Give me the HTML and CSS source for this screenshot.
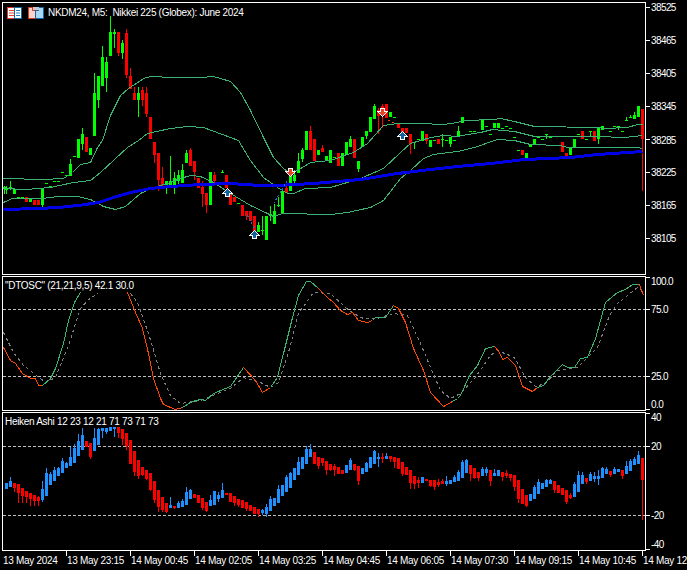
FILE: index.html
```html
<!DOCTYPE html>
<html lang="en">
  <head>
    <meta charset="UTF-8" />
    <title>NKDM24, M5</title>
    <link rel="stylesheet" href="styles.css">
  </head>
  <body>
    <div class="terminal">
      <div class="pane pane-price">
        <div class="plot">
          <svg id="priceChart" data-top="3"></svg>
          <div class="legend legend-price">
            <svg class="legend-icon" width="15" height="12" viewBox="0 0 15 12">
              <rect x="0.5" y="0.5" width="7" height="11" fill="#fff" stroke="#d8392b" />
              <rect x="7.5" y="0.5" width="7" height="11" fill="#fff" stroke="#1565a8" />
              <path d="M2 3.5h5M2 6h5M2 8.5h5" stroke="#e8432f" />
              <path d="M9 3.5h4M9 6h4M9 8.5h4" stroke="#1e7fc4" />
            </svg>
            <svg class="legend-icon" width="16" height="12" viewBox="0 0 16 12">
              <path d="M0.5 0.5h4v3h3v8h-7z" fill="#ffd4c8" stroke="#d8392b" />
              <path d="M10.5 3.5v-3h5v11h-8v-8z" fill="#a9d8f5" stroke="#1565a8" />
              <rect x="5" y="0" width="6" height="3" fill="#c8c8c8" />
            </svg>
            <span>NKDM24, M5:&nbsp; Nikkei 225 (Globex): June 2024</span>
          </div>
        </div>
        <div class="axis" id="priceAxis"></div>
      </div>

      <div class="pane pane-osc">
        <div class="plot">
          <svg id="oscChart" data-top="277"></svg>
          <div class="legend"><span>"DTOSC" (21,21,9,5) 42.1 30.0</span></div>
        </div>
        <div class="axis" id="oscAxis"></div>
      </div>

      <div class="pane pane-heiken">
        <div class="plot">
          <svg id="heikenChart" data-top="413"></svg>
          <div class="legend"><span>Heiken Ashi 12 23 12 21 71 73 71 73</span></div>
        </div>
        <div class="axis" id="heikenAxis"></div>
      </div>

      <div class="time-axis">
        <span class="time-label no-tick">13 May 2024</span>
        <span class="time-label">13 May 23:15</span>
        <span class="time-label">14 May 00:45</span>
        <span class="time-label">14 May 02:05</span>
        <span class="time-label">14 May 03:25</span>
        <span class="time-label">14 May 04:45</span>
        <span class="time-label">14 May 06:05</span>
        <span class="time-label">14 May 07:30</span>
        <span class="time-label">14 May 09:15</span>
        <span class="time-label">14 May 10:45</span>
        <span class="time-label">14 May 12</span>
      </div>
    </div>
    <script src="chart.js"></script>
  </body>
</html>
```

FILE: styles.css
```css
* {
  margin: 0;
  padding: 0;
  box-sizing: border-box;
}

body {
  width: 687px;
  height: 570px;
  overflow: hidden;
  background: #000;
  color: #fff;
  font-family: "Liberation Sans", Arial, sans-serif;
  font-size: 10px;
  line-height: 12px;
  letter-spacing: -0.3px;
}

.terminal {
  display: flex;
  flex-direction: column;
  gap: 1px;
  padding: 2px 0 0 2px;
}

.pane {
  display: flex;
  position: relative;
}
.pane-price {
  height: 273px;
}
.pane-osc {
  height: 135px;
}
.pane-heiken {
  height: 139px;
}

.plot {
  position: relative;
  flex: none;
  width: 644px;
  border: 1px solid #fff;
}
.plot > svg {
  display: block;
  width: 642px;
  height: 100%;
}

.legend {
  position: absolute;
  top: 3px;
  left: 2px;
  display: flex;
  align-items: center;
  white-space: nowrap;
}
.legend-price {
  top: 4px;
  left: 4px;
}
.legend-icon {
  flex: none;
  margin-right: 6px;
}
.legend-icon + .legend-icon {
  margin-right: 4px;
}

.axis {
  position: relative;
  flex: 1;
}
.axis-tick {
  position: absolute;
  left: -1px;
  width: 5px;
  height: 1px;
  background: #fff;
}
.axis-label {
  position: absolute;
  left: 5px;
  transform: translateY(-50%);
  white-space: nowrap;
  letter-spacing: -0.6px;
}

.time-axis {
  display: flex;
  margin-top: -1px;
}
.time-label {
  position: relative;
  flex: none;
  width: 64px;
  padding: 4px 0 0 1px;
  white-space: nowrap;
}
.time-label::before {
  content: "";
  position: absolute;
  top: 0;
  left: 0;
  width: 1px;
  height: 5px;
  background: #fff;
}
.no-tick::before {
  display: none;
}

/* chart shapes */
.wick,
.body,
.band,
.ma,
.osc,
.signal,
.level,
.trail,
.arrow {
  shape-rendering: crispEdges;
}
.band,
.ma,
.osc,
.signal,
.level,
.trail {
  fill: none;
}
.band {
  stroke: #3cb371;
}
.ma {
  stroke: #0000e6;
  stroke-width: 3;
}
.osc-up {
  stroke: #3cb371;
}
.osc-down {
  stroke: #ff4500;
}
.signal {
  stroke: #808080;
  stroke-dasharray: 3 3;
}
.level {
  stroke: #c0c0c0;
  stroke-dasharray: 3 2;
}
.trail {
  stroke-dasharray: 2 2;
}
.trail-blue {
  stroke: #1c6fb8;
}
.trail-red {
  stroke: #ff4500;
}
.bull {
  fill: #00ff00;
}
.bear {
  fill: #ff0000;
}
.ha-up {
  fill: #1e90ff;
}
.arrow {
  stroke: #fff;
}
.arrow-up {
  fill: #14649f;
}
.arrow-down {
  fill: #e2452b;
}
```

FILE: chart.js
```js
// --- Data: everything is in page pixels ---
// price bars: x, up, high, top, bottom, low
const priceBars = [
  [4,1,186,187,187,193],[6,1,186,188,189,193],[10,1,181,187,187,189],[14,1,189,189,193,193],
  [18,1,197,197,197,197],[22,1,197,197,197,197],[26,0,197,197,201,201],[30,1,199,199,201,201],
  [34,0,200,200,204,204],[38,0,200,200,204,204],[42,1,188,188,204,207],[46,1,183,183,183,183],
  [50,1,186,186,186,186],[54,1,181,181,181,181],[58,1,181,181,181,181],[62,1,172,172,172,172],
  [66,1,175,175,175,175],[70,1,159,164,175,175],[74,1,156,156,156,156],[78,1,139,139,157,157],
  [82,1,128,134,143,149],[86,0,137,137,151,151],[90,1,148,148,154,154],[94,1,73,93,135,135],
  [98,1,76,76,99,107],[102,1,46,57,85,85],[106,1,57,62,77,91],[110,1,16,32,55,55],
  [114,1,29,32,33,47],[118,0,32,32,52,55],[122,1,40,43,52,58],[126,0,29,33,74,77],
  [130,0,68,76,88,88],[134,0,87,93,99,99],[138,1,87,93,99,116],[142,0,87,90,99,105],
  [146,0,87,93,113,116],[150,0,117,117,138,138],[154,0,142,142,154,162],[158,0,153,153,179,190],
  [162,0,167,178,184,187],[166,1,181,181,184,193],[170,1,156,181,184,184],[174,1,172,178,185,193],
  [178,1,170,175,180,183],[182,1,164,170,182,182],[186,1,150,153,162,162],[190,0,148,150,165,165],
  [194,0,161,161,171,179],[198,0,178,178,187,187],[202,0,181,187,193,206],[206,0,193,193,204,212],
  [210,1,172,172,204,204],[214,0,172,175,180,184],[222,1,170,172,172,172],[226,0,175,175,187,187],
  [230,0,193,193,204,204],[234,0,197,197,201,201],[238,1,203,203,203,203],[242,0,205,205,215,215],
  [246,0,211,211,215,219],[250,0,211,211,220,220],[254,0,216,216,231,231],[258,1,222,225,231,231],
  [262,1,216,230,230,234],[266,1,216,216,239,239],[270,1,206,214,215,220],[274,1,204,211,223,223],
  [278,1,197,205,205,206],[282,1,191,191,212,212],[286,0,181,188,192,192],[290,1,175,175,190,190],
  [294,1,170,175,180,183],[298,1,153,161,172,172],[302,1,148,150,158,161],[306,1,131,131,149,149],
  [310,0,126,131,149,149],[314,0,139,139,160,160],[318,1,150,150,154,154],[322,0,145,148,151,151],
  [326,1,156,156,160,160],[330,1,150,150,162,162],[334,1,157,157,157,157],[338,0,153,153,165,165],
  [342,1,153,153,165,165],[346,1,142,142,154,154],[350,1,136,139,146,146],[354,0,139,139,157,157],
  [358,1,161,161,168,171],[362,1,137,137,146,146],[366,1,131,131,135,138],[370,1,117,117,131,131],
  [374,1,104,106,118,118],[378,0,108,110,115,133],[382,0,104,106,111,127],[386,0,104,104,117,117],
  [390,1,112,112,116,116],[394,1,117,117,117,117],[398,0,123,123,127,127],[402,0,128,128,132,132],
  [406,0,128,128,132,132],[410,0,134,134,143,153],[414,1,142,142,142,148],[418,1,139,139,139,139],
  [422,1,131,131,140,140],[426,0,134,134,140,143],[430,1,140,140,146,146],[434,1,140,140,140,140],
  [438,0,139,139,143,143],[442,1,134,139,139,146],[446,1,140,140,140,140],[450,1,137,137,143,146],
  [454,1,140,140,140,140],[458,1,126,131,135,135],[462,1,117,117,122,122],[470,1,131,131,131,131],
  [474,1,131,131,131,131],[478,1,132,132,132,132],[482,1,120,120,129,129],[486,1,126,126,126,126],
  [490,1,134,134,134,134],[494,1,123,123,127,127],[498,1,123,123,127,127],[502,1,128,128,128,128],
  [506,1,126,126,126,126],[510,1,128,128,128,128],[514,1,137,137,137,137],[518,1,150,150,150,150],
  [522,0,150,150,154,154],[526,1,153,153,157,157],[530,1,144,144,146,146],[534,1,139,139,143,143],
  [538,1,137,137,137,137],[542,1,139,139,139,139],[546,1,134,134,134,138],[550,1,137,137,137,137],
  [554,1,145,145,145,145],[562,0,142,142,151,151],[566,0,153,153,156,156],[570,1,148,148,154,154],
  [574,1,139,139,146,146],[578,1,134,134,134,134],[582,0,131,131,138,138],[586,1,139,139,139,139],
  [590,1,131,131,131,135],[594,0,131,131,140,140],[598,1,128,128,138,143],[602,1,126,126,129,129],
  [606,1,128,128,128,128],[610,1,131,131,131,131],[614,1,126,126,126,126],[618,1,126,126,126,129],
  [622,1,131,131,131,131],[626,1,117,120,120,120],[630,1,115,117,117,117],[634,1,112,115,118,118],
  [638,1,106,106,116,116],[642,0,109,109,138,190]
];

const upperBand = "3,178 43,179 63,178 72,172 80,164 90,162 97,147 102,140 110,115 120,95 128,88 145,77 153,76 170,77 200,77 213,76 230,81 240,92 250,110 263,137 273,157 283,168 290,173 297,170 310,162 330,160 353,152 367,143 383,125 397,123 420,123 443,124 457,122 464,120 494,119 500,118 514,121 534,126 597,127 604,128 627,127 637,124 642,124";
const middleBand = "3,188 25,189 50,187 73,182 90,180 100,172 127,147 138,140 147,133 170,128 187,126 203,127 230,137 238,140 250,160 263,177 277,187 287,193 293,193 305,188 330,187 360,178 383,168 400,152 410,143 430,137 443,135 457,136 467,134 480,132 492,129 514,131 534,136 557,136 597,136 624,137 642,135";
const lowerBand = "3,202 12,198 42,198 57,196 77,196 90,199 103,206 115,209 125,206 140,193 153,187 167,183 180,178 190,175 200,176 213,182 230,193 250,205 267,213 273,216 282,213 330,214 347,212 370,207 383,200 400,178 410,170 423,158 433,154 457,151 474,147 494,140 497,139 514,140 530,144 560,145 567,147 637,147 642,148";
const movingAverage = "3,209 38,208 58,207 78,205 98,202 113,197 130,192 150,188 170,186 200,184 230,183 260,185 277,185 313,183 360,179 397,173 430,169 457,166 490,163 524,159 570,157 597,154 642,151";

const trails = [
  ["trail-blue", "247,215 254,228"],
  ["trail-blue", "273,203 287,180"],
  ["trail-red", "388,120 395,123"]
];
const arrows = [
  ["up", 227, 193], ["up", 254, 235], ["up", 402, 136],
  ["down", 290, 171], ["down", 382, 111]
];

const oscSegments = [
  ["osc-down", "3,347 10,360 15,363 22,373 30,378 35,378 38,385 42,385"],
  ["osc-up", "42,385 50,378 55,368 63,343 68,320 74,302 80,292"],
  ["osc-down", "127,292 135,312 142,328 148,353 153,378 160,398 163,404 175,409 182,407"],
  ["osc-up", "182,407 192,401 200,399 205,400 213,393 230,386 243,367"],
  ["osc-down", "243,367 255,380 262,392 270,387"],
  ["osc-up", "270,387 277,377 283,353 292,317 298,295 306,281 310,281 318,288"],
  ["osc-down", "318,288 327,297 333,302 340,310 347,314 352,312 358,320 367,322 372,320"],
  ["osc-up", "372,320 375,317 385,317 393,305"],
  ["osc-down", "393,305 398,308 405,322 413,348 423,370 430,392 443,406 452,401"],
  ["osc-up", "452,401 457,398 460,395 469,375 477,365 485,348 494,346"],
  ["osc-down", "494,346 499,352 502,359 507,357 515,365 522,386 532,391 537,387"],
  ["osc-up", "537,387 543,385 549,377 562,364 567,367 574,367 580,358 587,357 595,338 605,302 617,292 625,289 632,284 639,284"],
  ["osc-down", "639,284 643,295"]
];
const oscSignal = [
  "3,332 13,352 23,365 40,378 45,382 55,377 68,345 80,308 87,300 98,292",
  "130,293 137,302 148,333 160,373 170,395 180,403 200,400 230,388 243,377 260,382 270,387 278,382 288,352 298,313 313,292 330,293 345,307 353,313 363,318 377,318 393,313 407,315 420,343 430,367 440,390 450,398 460,393 474,378 490,355 497,350 514,357 525,377 535,386 545,383 557,370 577,367 597,347 609,315 617,303 637,287 642,290"
];

// heiken ashi bars from x=6, every 4px: up, high, top, bottom, low
const heikenBars = [
  [1,483,483,488,488],[1,477,481,486,486],[0,483,483,487,491],[0,484,484,492,502],[0,488,488,495,502],
  [0,491,491,496,502],[0,493,493,498,505],[0,495,495,500,505],[0,496,497,500,505],[1,481,489,499,501],
  [1,468,473,495,495],[1,472,474,484,484],[1,467,470,480,480],[1,467,468,475,475],[1,458,461,472,472],
  [1,462,463,467,467],[1,447,457,465,465],[1,444,448,462,462],[1,434,441,455,455],[1,428,435,449,449],
  [0,441,441,446,446],[0,443,443,456,458],[1,428,438,450,450],[1,428,429,444,444],[1,428,428,430,437],
  [1,428,428,431,433],[1,427,427,430,430],[1,427,427,428,436],[0,427,427,432,437],[0,429,429,438,444],
  [0,433,433,445,449],[0,440,440,463,463],[0,451,451,471,475],[0,460,460,475,478],[0,467,467,474,475],
  [0,470,470,478,479],[0,473,473,489,490],[0,481,481,499,502],[0,490,490,506,511],[0,497,497,509,511],
  [0,503,503,511,512],[1,497,505,507,507],[0,506,506,507,508],[1,501,503,507,507],[1,499,501,506,506],
  [1,487,492,504,504],[1,489,490,498,498],[0,494,494,497,497],[0,495,495,502,502],[0,498,498,507,509],
  [0,502,502,510,511],[1,495,500,505,505],[1,491,491,504,504],[1,492,495,498,501],[1,483,490,497,497],
  [0,493,493,494,494],[0,493,493,501,501],[0,496,496,502,505],[0,499,499,504,506],[0,500,500,507,507],
  [0,502,502,508,510],[0,505,505,510,510],[0,507,507,513,513],[0,509,509,513,516],[1,509,510,512,514],
  [1,504,507,513,516],[1,496,499,510,510],[1,498,498,505,505],[1,485,489,502,502],[1,485,485,495,495],
  [1,475,477,491,491],[1,472,473,487,487],[1,468,468,479,479],[1,457,462,474,474],[1,457,457,468,468],
  [1,446,449,463,463],[1,444,449,456,456],[0,452,452,463,463],[0,457,457,465,468],[0,458,458,462,465],
  [0,461,461,469,474],[0,464,464,469,470],[0,464,466,469,475],[0,467,467,473,473],[0,470,470,473,473],
  [1,465,465,472,472],[1,458,460,469,469],[0,464,464,469,470],[0,466,466,480,484],[1,468,468,473,473],
  [1,462,463,471,471],[1,457,457,467,467],[1,450,451,463,463],[1,453,457,458,466],[0,453,457,458,462],
  [1,453,456,458,458],[0,456,456,458,461],[0,457,457,461,467],[0,458,458,468,468],[0,462,462,473,475],
  [0,467,467,474,474],[0,470,470,482,488],[0,476,476,483,488],[0,477,480,482,487],[1,477,477,482,482],
  [0,479,479,480,480],[0,480,480,485,486],[0,480,480,486,489],[0,479,482,484,486],[0,479,481,483,483],
  [1,476,481,483,485],[1,480,480,483,483],[1,475,477,481,481],[1,470,472,480,480],[1,460,462,477,477],
  [1,459,460,472,472],[0,465,465,473,480],[0,468,468,477,478],[0,472,472,477,480],[1,467,469,475,475],
  [1,467,469,472,475],[0,470,470,480,485],[1,469,473,475,475],[1,470,470,475,475],[0,472,472,476,480],
  [0,470,473,475,477],[0,474,474,477,480],[0,475,475,486,490],[0,480,480,498,502],[0,489,489,503,503],
  [0,495,495,505,506],[1,494,494,500,500],[1,485,487,498,498],[1,479,482,493,493],[1,483,483,488,488],
  [1,479,480,486,486],[1,479,480,483,483],[0,481,481,489,492],[0,485,485,492,492],[0,488,488,494,494],
  [0,490,490,501,503],[0,493,495,497,498],[1,482,484,496,496],[1,471,475,491,491],[1,472,475,483,483],
  [0,478,478,481,483],[1,472,474,480,480],[1,472,476,478,481],[1,470,476,478,484],[1,467,468,477,477],
  [1,467,469,473,473],[0,471,471,474,476],[1,467,469,473,473],[1,469,469,471,471],[0,470,470,475,478],
  [1,461,466,473,473],[1,459,461,470,470],[1,457,459,464,464],[1,451,455,463,463],[0,458,458,479,519]
];

// axis scales: label, tick y, label y
const priceScale = [
  ["38525",7,7],["38465",40,40],["38405",73,73],["38345",106,106],
  ["38285",139,140],["38225",172,172],["38165",205,205],["38105",238,238]
];
const oscScale = [["100.0",277,281],["75.0",309,309],["25.0",376,376],["0.0",409,404]];
const heikenScale = [["40",413,417],["20",446,446],["-20",515,515],["-40",549,544]];

// --- Drawing helpers ---
const SVG_NS = "http://www.w3.org/2000/svg";

function add(svg, tag, attrs) {
  const el = document.createElementNS(SVG_NS, tag);
  for (const key in attrs) el.setAttribute(key, attrs[key]);
  svg.appendChild(el);
  return el;
}

function setupChart(id) {
  const svg = document.getElementById(id);
  const top = Number(svg.dataset.top);
  // svg units are page pixels, so the data above can be used directly
  svg.setAttribute("viewBox", `3 ${top} 642 ${svg.clientHeight}`);
  return svg;
}

function shiftPoints(points) {
  return points.split(" ").map((p) => {
    const [x, y] = p.split(",");
    return `${Number(x) + 0.5},${Number(y) + 0.5}`;
  }).join(" ");
}

function line(svg, cls, points) {
  add(svg, "polyline", { class: cls, points: shiftPoints(points) });
}

function drawBar(svg, x, cls, high, top, bottom, low) {
  add(svg, "rect", { class: "wick " + cls, x: x, y: high, width: 1, height: low - high + 1 });
  add(svg, "rect", { class: "body " + cls, x: x - 1, y: top, width: 3, height: bottom - top + 1 });
}

function drawLevel(svg, y) {
  add(svg, "line", { class: "level", x1: 3, x2: 645, y1: y + 0.5, y2: y + 0.5 });
}

function drawArrow(svg, dir, cx, cy) {
  const x = cx + 0.5;
  const y = cy + 0.5;
  const s = dir === "up" ? 1 : -1;
  const pts = [
    [x, y - 5 * s], [x + 5, y], [x + 2, y], [x + 2, y + 3 * s],
    [x - 2, y + 3 * s], [x - 2, y], [x - 5, y]
  ];
  add(svg, "polygon", { class: "arrow arrow-" + dir, points: pts.map((p) => p.join(",")).join(" ") });
}

function fillAxis(id, paneTop, scale) {
  const axis = document.getElementById(id);
  scale.forEach(([text, tickY, labelY]) => {
    const tick = document.createElement("span");
    tick.className = "axis-tick";
    tick.style.top = tickY - paneTop + "px";
    axis.appendChild(tick);

    const label = document.createElement("span");
    label.className = "axis-label";
    label.style.top = labelY - paneTop + 0.5 + "px";
    label.textContent = text;
    axis.appendChild(label);
  });
}

// --- Price pane ---
const priceSvg = setupChart("priceChart");
priceBars.forEach(([x, up, h, t, b, l]) => drawBar(priceSvg, x, up ? "bull" : "bear", h, t, b, l));
[upperBand, middleBand, lowerBand].forEach((band) => line(priceSvg, "band", band));
line(priceSvg, "ma", movingAverage);
trails.forEach(([cls, pts]) => line(priceSvg, "trail " + cls, pts));
arrows.forEach(([dir, x, y]) => drawArrow(priceSvg, dir, x, y));

// --- Oscillator pane ---
const oscSvg = setupChart("oscChart");
drawLevel(oscSvg, 309);
drawLevel(oscSvg, 376);
oscSignal.forEach((pts) => line(oscSvg, "signal", pts));
oscSegments.forEach(([cls, pts]) => line(oscSvg, "osc " + cls, pts));

// --- Heiken Ashi pane ---
const heikenSvg = setupChart("heikenChart");
drawLevel(heikenSvg, 446);
drawLevel(heikenSvg, 515);
heikenBars.forEach(([up, h, t, b, l], i) => drawBar(heikenSvg, 6 + i * 4, up ? "ha-up" : "bear", h, t, b, l));

// --- Axes ---
fillAxis("priceAxis", 2, priceScale);
fillAxis("oscAxis", 276, oscScale);
fillAxis("heikenAxis", 412, heikenScale);
```
